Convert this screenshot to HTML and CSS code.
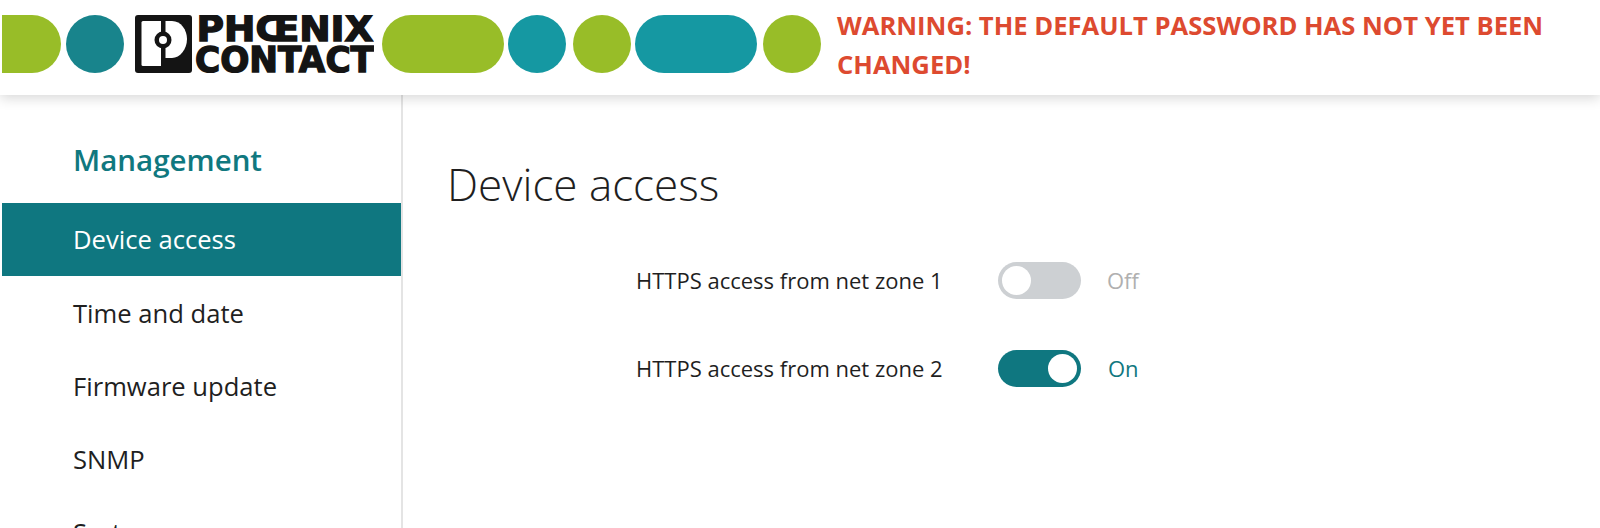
FILE: index.html
```html
<!DOCTYPE html>
<html lang="en">
<head>
<meta charset="utf-8">
<title>Device access</title>
<link rel="stylesheet" href="styles.css">
</head>
<body>
<header class="header">
  <div class="brand">
    <span class="blob blob-start lime"></span>
    <span class="blob dot deep"></span>
    <svg class="logo" viewBox="0 0 239 58" width="239" height="58" aria-label="Phoenix Contact">
      <rect x="0" y="0" width="57" height="58" rx="3" fill="#141414"/>
      <path d="M8 6H26V51H8A1.500 1.500 0 0 1 6.500 49.500V7.500A1.500 1.500 0 0 1 8 6Z" fill="#fff"/>
      <path d="M30.500 6H37C46 6 52 15 52 24C52 34 45 43 37 43H30.500Z" fill="#fff"/>
      <circle cx="28" cy="25" r="8.500" fill="#141414"/>
      <circle cx="28" cy="25" r="4" fill="#fff"/>
      <text class="logo-text" x="61.500" y="26.300" textLength="177" lengthAdjust="spacingAndGlyphs">PHŒNIX</text>
      <text class="logo-text" x="60" y="56.800" textLength="179" lengthAdjust="spacingAndGlyphs">CONTACT</text>
    </svg>
    <span class="blob pill lime gap-tiny"></span>
    <span class="blob dot teal"></span>
    <span class="blob dot lime gap-tiny"></span>
    <span class="blob pill teal gap-small"></span>
    <span class="blob dot lime"></span>
  </div>
  <p class="warning">WARNING: THE DEFAULT PASSWORD HAS NOT YET BEEN CHANGED!</p>
</header>
<div class="layout">
  <nav class="sidebar">
    <h2 class="nav-title">Management</h2>
    <ul class="nav-list">
      <li class="nav-item active">Device access</li>
      <li class="nav-item">Time and date</li>
      <li class="nav-item">Firmware update</li>
      <li class="nav-item">SNMP</li>
      <li class="nav-item">System</li>
    </ul>
  </nav>
  <main class="content">
    <h1 class="title">Device access</h1>
    <div class="settings">
      <div class="setting">
        <span class="setting-label">HTTPS access from net zone 1</span>
        <span class="toggle"><span class="knob"></span></span>
        <span class="state">Off</span>
      </div>
      <div class="setting">
        <span class="setting-label">HTTPS access from net zone 2</span>
        <span class="toggle on"><span class="knob"></span></span>
        <span class="state on">On</span>
      </div>
    </div>
  </main>
</div>
</body>
</html>
```
FILE: styles.css
```css
* { box-sizing: border-box; }
html, body { height: 100%; }
body {
  margin: 0;
  overflow: hidden;
  background: #fff;
  color: #1f1f1f;
  font-family: "Open Sans", "Liberation Sans", sans-serif;
}
.header {
  position: relative;
  z-index: 1;
  display: flex;
  align-items: flex-start;
  height: 95px;
  padding: 15px 0 0 2px;
  background: #fff;
  box-shadow: 0 3px 12px rgba(0, 0, 0, 0.16);
}
.brand {
  display: flex;
  flex: none;
  align-items: center;
  height: 58px;
}
.blob { display: block; height: 58px; margin-right: 7px; border-radius: 29px; flex: none; }
.lime { background: #98bd28; }
.deep { background: #18848c; }
.teal { background: #1598a2; }
.dot { width: 58px; }
.pill { width: 122px; }
.blob-start { width: 59px; margin-right: 5px; border-radius: 0 29px 29px 0; }
.deep { margin-right: 11px; }
.gap-tiny { margin-right: 4px; }
.gap-small { margin-right: 6px; }
.logo { flex: none; margin-right: 8px; }
.logo-text {
  font-family: "DejaVu Sans", sans-serif;
  font-weight: 700;
  font-size: 35px;
  fill: #141414;
  stroke: #141414;
  stroke-width: 1.4px;
}
.warning {
  width: 740px;
  margin: -9px 0 0 9px;
  color: #dd4a30;
  font-size: 25.6px;
  font-weight: 700;
  line-height: 39px;
}
.layout { display: flex; height: 433px; }
.sidebar {
  flex: none;
  width: 403px;
  padding-left: 2px;
  border-right: 2px solid #e4e4e4;
}
.nav-title {
  margin: 0;
  height: 108px;
  padding: 45px 0 0 71px;
  color: #10787f;
  font-size: 29.5px;
  font-weight: 600;
  line-height: 40px;
}
.nav-list { margin: 0; padding: 0; list-style: none; }
.nav-item {
  height: 73px;
  padding-left: 71px;
  font-size: 25.6px;
  line-height: 75px;
}
.nav-item.active { background: #0f7780; color: #fff; line-height: 74px; }
.content { flex: 1; padding: 0 0 0 44px; }
.title {
  margin: 0;
  padding-top: 59px;
  font-size: 44px;
  font-weight: 300;
  line-height: 60px;
}
.settings {
  display: flex;
  flex-direction: column;
  gap: 51px;
  margin: 48px 0 0 189px;
}
.setting { display: flex; align-items: center; height: 37px; font-size: 22px; }
.setting-label { width: 362px; margin-bottom: 2px; }
.toggle {
  display: flex;
  width: 83px;
  height: 37px;
  padding: 4px;
  border-radius: 19px;
  background: #cdd0d3;
}
.toggle.on { justify-content: flex-end; background: #0f7780; }
.knob { width: 29px; height: 29px; border-radius: 50%; background: #fff; }
.state { margin-left: 26px; margin-bottom: 2px; color: #b0b0b0; }
.state.on { margin-left: 27px; color: #10787f; }
```
